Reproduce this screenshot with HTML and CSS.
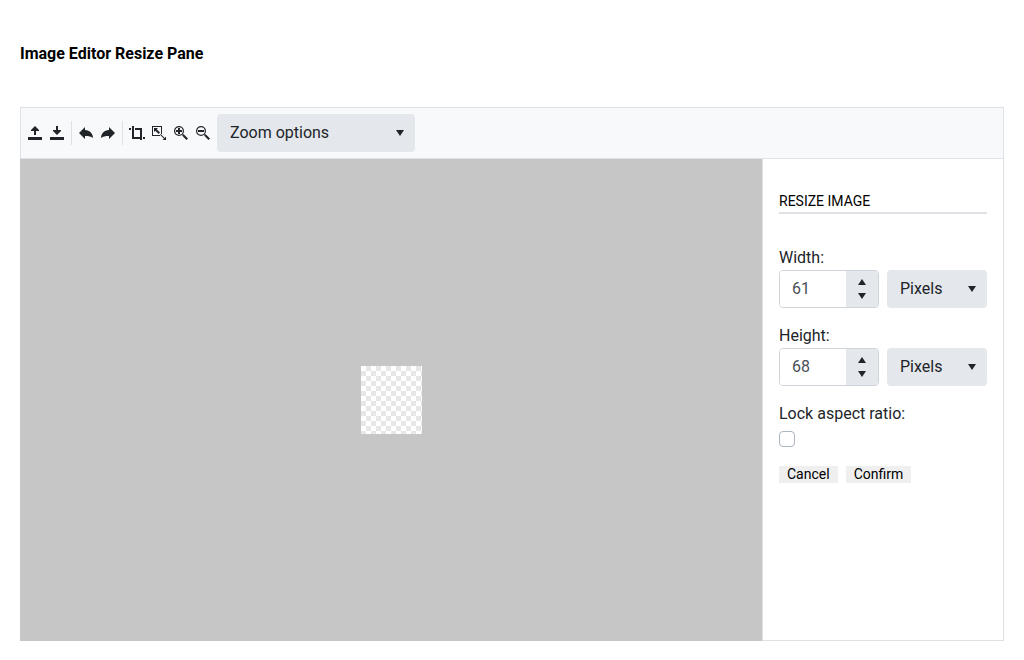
FILE: index.html
```html
<!DOCTYPE html>
<html lang="en">
<head>
<meta charset="utf-8">
<meta name="viewport" content="width=device-width, initial-scale=1">
<title>Image Editor Resize Pane</title>
<link rel="stylesheet" href="styles.css">
</head>
<body>
<h1 class="page-title">Image Editor Resize Pane</h1>
<main class="editor">
  <div class="toolbar" role="toolbar" aria-label="Image tools">
    <button class="tool" type="button" aria-label="Open image"><svg class="icon" viewBox="0 0 16 16"><path d="M1 12h14v3H1zM8 1l4 4v1H9v4H7V6H4V5z"/></svg></button>
    <button class="tool" type="button" aria-label="Save image"><svg class="icon" viewBox="0 0 16 16"><path d="M1 12h14v3H1zM8 10l4-4V5H9V1H7v4H4v1z"/></svg></button>
    <span class="separator"></span>
    <button class="tool" type="button" aria-label="Undo"><svg class="icon" viewBox="0 0 16 16"><path d="M1 8l6-6v3c5 0 8 4 8 8C13 11.500 11 11 7 11v3z"/></svg></button>
    <button class="tool" type="button" aria-label="Redo"><svg class="icon" viewBox="0 0 16 16"><path d="M15 8L9 2v3c-5 0-8 4-8 8C3 11.500 5 11 9 11v3z"/></svg></button>
    <span class="separator"></span>
    <button class="tool" type="button" aria-label="Crop"><svg class="icon" viewBox="0 0 16 16"><path d="M0 3h2v2H0zM3 1h2v11h6v2H3zM6 3h7v12h-2V5H6zM14 12h2v2h-2z"/></svg></button>
    <button class="tool" type="button" aria-label="Resize"><svg class="icon" viewBox="0 0 16 16"><path d="M1 1h10v8h-1V2H2v8h7v1H1zM3 3h4L5.700 4.300 9 7.600 7.600 9 4.300 5.700 3 7zM9.700 9l4 4L15 11.500V15h-3.500l1.500-1.300-4-4z"/></svg></button>
    <button class="tool" type="button" aria-label="Zoom in"><svg class="icon" viewBox="0 0 16 16"><circle class="lens" cx="6" cy="6" r="4.400"/><path d="M5 3h2v2h2v2H7v2H5V7H3V5h2zM9 10l1-1 1.500 1L15 13.500 13.500 15 10 11.500z"/></svg></button>
    <button class="tool" type="button" aria-label="Zoom out"><svg class="icon" viewBox="0 0 16 16"><circle class="lens" cx="6" cy="6" r="4.400"/><path d="M3 5h6v2H3zM9 10l1-1 1.500 1L15 13.500 13.500 15 10 11.500z"/></svg></button>
    <div class="picker picker-zoom">
      <select class="select" aria-label="Zoom options"><option>Zoom options</option></select>
    </div>
  </div>
  <div class="workspace">
    <section class="canvas" aria-label="Canvas"><div class="image"></div></section>
    <form class="pane">
      <h2 class="pane-title">RESIZE IMAGE</h2>
      <label class="label" for="width">Width:</label>
      <div class="row">
        <div class="numeric">
          <input class="number" id="width" type="number" value="61">
          <div class="spinner">
            <button class="spin spin-up" type="button" aria-label="Increase width"></button>
            <button class="spin spin-down" type="button" aria-label="Decrease width"></button>
          </div>
        </div>
        <div class="picker"><select class="select" aria-label="Width unit"><option>Pixels</option><option>Percents</option></select></div>
      </div>
      <label class="label" for="height">Height:</label>
      <div class="row">
        <div class="numeric">
          <input class="number" id="height" type="number" value="68">
          <div class="spinner">
            <button class="spin spin-up" type="button" aria-label="Increase height"></button>
            <button class="spin spin-down" type="button" aria-label="Decrease height"></button>
          </div>
        </div>
        <div class="picker"><select class="select" aria-label="Height unit"><option>Pixels</option><option>Percents</option></select></div>
      </div>
      <label class="label" for="lock">Lock aspect ratio:</label>
      <input class="checkbox" id="lock" type="checkbox">
      <div class="actions">
        <button class="action" type="button">Cancel</button>
        <button class="action" type="button">Confirm</button>
      </div>
    </form>
  </div>
</main>
</body>
</html>
```
FILE: styles.css
```css
* {
  box-sizing: border-box;
}

body {
  display: flex;
  flex-direction: column;
  min-height: 100vh;
  margin: 0;
  padding: 42px 20px 19px;
  background: #fff;
  color: #212529;
  font: 16px/24px Roboto, sans-serif;
}

button,
input,
select {
  margin: 0;
  padding: 0;
  border: 0;
  color: inherit;
  font: inherit;
}

.page-title {
  margin: 0 0 41px;
  color: #000;
  font-size: 16px;
  font-weight: 700;
}

.editor {
  display: flex;
  flex: 1;
  flex-direction: column;
}

.toolbar {
  display: flex;
  align-items: center;
  padding: 6px 3px;
  border: 1px solid #dee2e6;
  background: #f8f9fb;
}

.tool {
  display: flex;
  align-items: center;
  justify-content: center;
  width: 22px;
  height: 24px;
  background: none;
}

.icon {
  width: 16px;
  height: 16px;
  fill: #212529;
}

.lens {
  fill: none;
  stroke: #212529;
  stroke-width: 1.2;
}

.separator {
  width: 1px;
  height: 24px;
  margin: 0 3px;
  background: #dee2e6;
}

.picker {
  position: relative;
  min-width: 0;
}

.picker::after {
  position: absolute;
  top: 16px;
  right: 11px;
  width: 8px;
  height: 6px;
  background: #212529;
  clip-path: polygon(0 0, 100% 0, 50% 100%);
  content: "";
  pointer-events: none;
}

.picker-zoom {
  flex: 0 0 198px;
  margin-left: 3px;
}

.select {
  display: block;
  width: 100%;
  height: 38px;
  padding: 0 28px 0 13px;
  border-radius: 4px;
  appearance: none;
  background: #e4e7eb;
}

.workspace {
  display: flex;
  flex: 1;
}

.canvas {
  display: flex;
  flex: 1;
  align-items: center;
  justify-content: center;
  background: #c6c6c6;
}

.image {
  width: 61px;
  height: 68px;
  background: repeating-conic-gradient(#e7e7e7 0 25%, #fff 0 50%) 0 0 / 10px 10px;
}

.pane {
  flex: none;
  width: 242px;
  padding: 32px 16px;
  border: 1px solid #dee2e6;
  border-top: 0;
}

.pane-title {
  margin: 0 0 32px;
  padding-bottom: 1px;
  border-bottom: 2px solid #dee2e6;
  color: #000;
  font-size: 14px;
  font-weight: 400;
  line-height: 20px;
}

.label {
  display: block;
}

.row {
  display: grid;
  grid-template-columns: 1fr 1fr;
  gap: 8px;
  margin-bottom: 16px;
}

.numeric {
  display: flex;
  min-width: 0;
  height: 38px;
  overflow: hidden;
  border: 1px solid #ced4da;
  border-radius: 4px;
}

.number {
  flex: 1 1 0;
  min-width: 0;
  padding-left: 12px;
  appearance: textfield;
  background: #fff;
  color: #495057;
}

.number::-webkit-inner-spin-button {
  appearance: none;
}

.spinner {
  display: flex;
  flex: 0 0 32px;
  flex-direction: column;
  background: #e4e7eb;
}

.spin {
  display: flex;
  flex: 1;
  justify-content: center;
  background: none;
}

.spin-up {
  align-items: flex-end;
  padding-bottom: 4px;
}

.spin-down {
  align-items: flex-start;
  padding-top: 4px;
}

.spin::before {
  width: 8px;
  height: 6px;
  background: #212529;
  content: "";
}

.spin-up::before {
  clip-path: polygon(0 100%, 100% 100%, 50% 0);
}

.spin-down::before {
  clip-path: polygon(0 0, 100% 0, 50% 100%);
}

.checkbox {
  display: block;
  width: 16px;
  height: 16px;
  margin: 5px 0 19px;
  border: 1px solid #adb5bd;
  border-radius: 4px;
  appearance: none;
  background: #fff;
}

.checkbox:checked {
  background: #495057;
}

.actions {
  display: flex;
  gap: 8px;
}

.action {
  padding: 0 8px;
  background: #efefef;
  color: #000;
  font-size: 14px;
  line-height: 17px;
}
```
